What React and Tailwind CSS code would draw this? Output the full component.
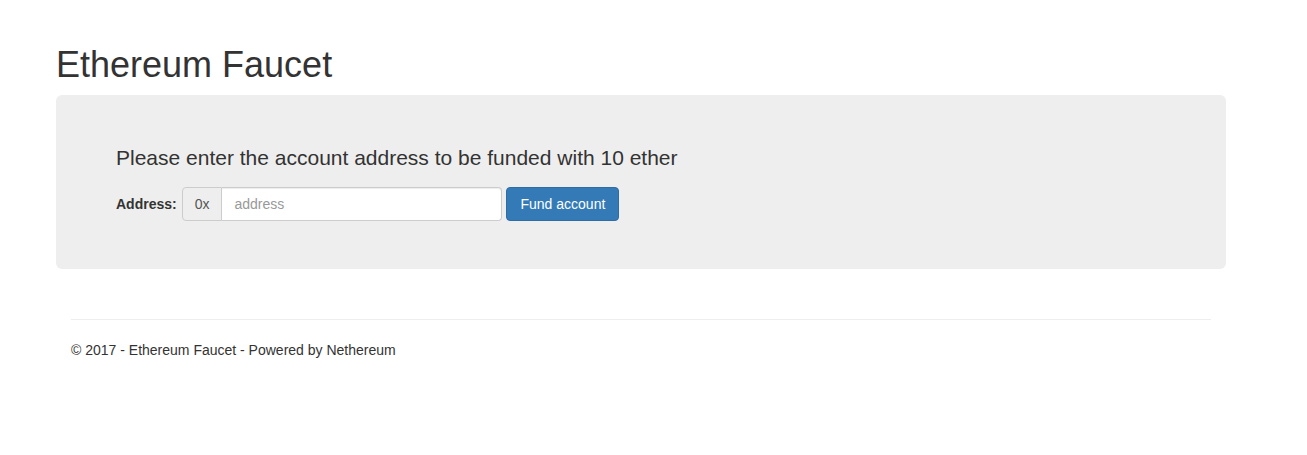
import React from "react";

export default function App() {
  return (
    <div
      className="min-h-[455px] bg-white text-[14px] leading-[20px] text-[#333]"
      style={{ fontFamily: '"Liberation Sans", Arial, sans-serif' }}
    >
      <div className="ml-[56px] w-[1170px] pt-[45px]">
        {/* Title */}
        <h1 className="mb-[10px] text-[36px] leading-[39.6px] font-normal text-[#333]">
          Ethereum Faucet
        </h1>

        {/* Jumbotron */}
        <div className="rounded-[6px] bg-[#eee] px-[60px] py-[48px]">
          <p className="mb-[14px] text-[21px] leading-[30px] font-light">
            Please enter the account address to be funded with 10 ether
          </p>
          <form className="flex items-center" onSubmit={(e) => e.preventDefault()}>
            <label className="mr-[5px] font-bold">Address:</label>
            <div className="flex h-[34px]">
              <span className="flex items-center rounded-l-[4px] border border-[#ccc] bg-[#eee] px-[12px] text-[#555]">
                0x
              </span>
              <input
                type="text"
                placeholder="address"
                className="h-[34px] w-[280px] rounded-r-[4px] border border-l-0 border-[#ccc] bg-white px-[12px] text-[#555] shadow-[inset_0_1px_1px_rgba(0,0,0,0.075)] outline-none placeholder:text-[#999]"
              />
            </div>
            <button
              type="submit"
              className="ml-[4px] h-[34px] rounded-[4px] border border-[#2e6da4] bg-[#337ab7] px-[13px] text-white"
            >
              Fund account
            </button>
          </form>
        </div>

        {/* Footer */}
        <div className="px-[15px] pt-[50px]">
          <hr className="mb-[20px] border-0 border-t border-[#eee]" />
          <footer>
            <p className="my-0">© 2017 - Ethereum Faucet - Powered by Nethereum</p>
          </footer>
        </div>
      </div>
    </div>
  );
}
